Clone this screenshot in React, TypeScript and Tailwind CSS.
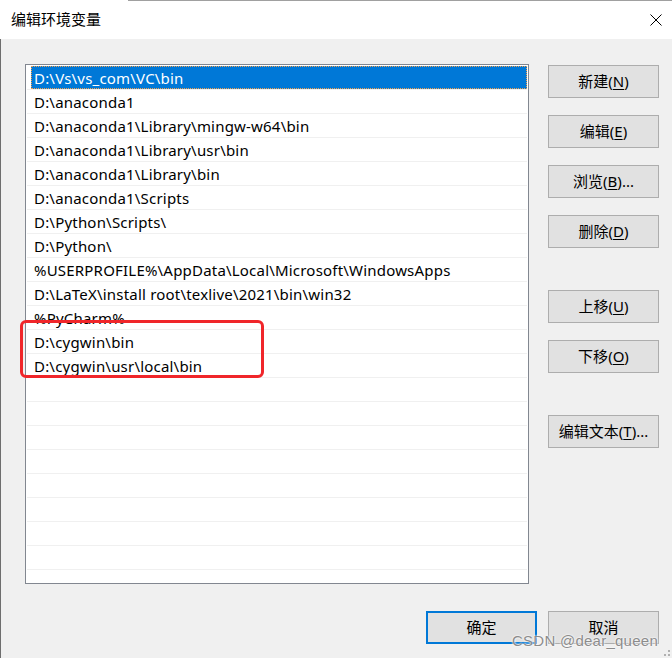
const paths = [
  "D:\\Vs\\vs_com\\VC\\bin",
  "D:\\anaconda1",
  "D:\\anaconda1\\Library\\mingw-w64\\bin",
  "D:\\anaconda1\\Library\\usr\\bin",
  "D:\\anaconda1\\Library\\bin",
  "D:\\anaconda1\\Scripts",
  "D:\\Python\\Scripts\\",
  "D:\\Python\\",
  "%USERPROFILE%\\AppData\\Local\\Microsoft\\WindowsApps",
  "D:\\LaTeX\\install root\\texlive\\2021\\bin\\win32",
  "%PyCharm%",
  "D:\\cygwin\\bin",
  "D:\\cygwin\\usr\\local\\bin",
];

const rows = [...paths, ...Array(9).fill("")];

type BtnProps = {
  label: string;
  hot: string;
  tail?: string;
  className?: string;
};

function WinButton({ label, hot, tail = "", className = "" }: BtnProps) {
  return (
    <button
      className={
        "w-[111px] h-[33px] bg-[#e1e1e1] border border-[#adadad] flex items-center justify-center text-[15px] text-black " +
        className
      }
    >
      {label}(<span className="underline underline-offset-2">{hot}</span>){tail}
    </button>
  );
}

export default function App() {
  return (
    <div
      className="relative w-[672px] h-[658px] flex flex-col overflow-hidden"
      style={{ fontFamily: '"Noto Sans", "Noto Sans CJK SC", sans-serif' }}
    >
      {/* title bar */}
      <div className="h-[39px] bg-white flex items-center justify-between pl-[11px] pr-[10px]">
        <span className="text-[15px] text-black">编辑环境变量</span>
        <svg width="12" height="12" viewBox="0 0 12 12">
          <path d="M0.5 0.5 L11.5 11.5 M11.5 0.5 L0.5 11.5" stroke="#000" strokeWidth="1" />
        </svg>
      </div>
      <div className="absolute left-[128px] right-0 top-0 h-px bg-[#a0a0a0]" />

      {/* body */}
      <div className="flex-1 bg-[#f0f0f0] border-l border-[#6e6e6e] flex flex-col pl-[24px]">
        <div className="flex">
          <div className="mt-[25px] w-[504px] h-[520px] border border-[#828790] bg-white pt-[1px] px-[1px] overflow-hidden">
            {rows.map((p, i) => (
              <div key={i} className="h-[24px] border-b border-[#f0f0f0] flex">
                {i === 0 ? (
                  <div className="ml-[4px] flex-1 bg-[#0078d7] border border-dotted border-[#f0a050] flex items-center pl-[2px] pt-px text-white text-[15px] tracking-[0.2px] whitespace-nowrap">
                    {p}
                  </div>
                ) : (
                  <div className="flex-1 flex items-center pl-[7px] pt-px text-black text-[15px] tracking-[0.2px] whitespace-nowrap">
                    {p}
                  </div>
                )}
              </div>
            ))}
          </div>

          <div className="ml-[19px] mt-[26px] flex flex-col gap-[17px]">
            <WinButton label="新建" hot="N" />
            <WinButton label="编辑" hot="E" />
            <WinButton label="浏览" hot="B" tail="..." />
            <WinButton label="删除" hot="D" />
            <WinButton label="上移" hot="U" className="mt-[25px]" />
            <WinButton label="下移" hot="O" />
            <WinButton label="编辑文本" hot="T" tail="..." className="mt-[25px]" />
          </div>
        </div>

        <div className="mt-[27px] flex justify-end gap-[11px] pr-[13px]">
          <button className="w-[111px] h-[33px] bg-[#e1e1e1] border-2 border-[#0078d7] flex items-center justify-center text-[15px] text-black">
            确定
          </button>
          <button className="w-[111px] h-[33px] bg-[#e1e1e1] border border-[#adadad] flex items-center justify-center text-[15px] text-black">
            取消
          </button>
        </div>
      </div>

      {/* red annotation box */}
      <div className="absolute left-[20px] top-[320px] w-[244px] h-[58px] border-[3px] border-[#f0262a] rounded-[6px]" />

      {/* watermark */}
      <div
        className="absolute left-[512px] top-[630px] text-[15px] tracking-[0.25px] text-[#8c8c8c] whitespace-nowrap"
        style={{ fontFamily: '"Liberation Sans", sans-serif', textShadow: "0 0 2px #fff, 0 0 2px #fff" }}
      >
        CSDN @dear_queen
      </div>

      {/* resize grip */}
      <div className="absolute right-[2px] bottom-[2px] flex flex-col items-end gap-[2px]">
        <div className="w-[2px] h-[2px] bg-[#b0b0b0]" />
        <div className="flex gap-[2px]">
          <div className="w-[2px] h-[2px] bg-[#b0b0b0]" />
          <div className="w-[2px] h-[2px] bg-[#b0b0b0]" />
        </div>
      </div>
    </div>
  );
}
